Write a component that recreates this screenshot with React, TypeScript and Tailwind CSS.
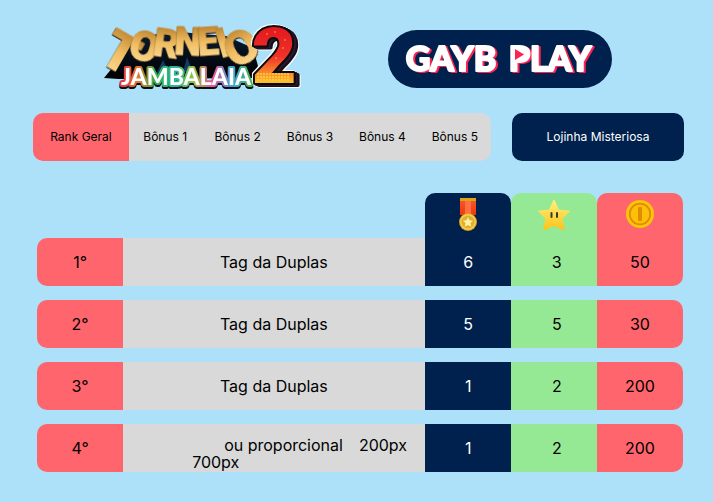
import React from "react";

type Row = { rank: string; name: React.ReactNode; medals: number; stars: number; coins: number };

const bonuses = ["Bônus 1", "Bônus 2", "Bônus 3", "Bônus 4", "Bônus 5"];

const rows: Row[] = [
  { rank: "1°", name: "Tag da Duplas", medals: 6, stars: 3, coins: 50 },
  { rank: "2°", name: "Tag da Duplas", medals: 5, stars: 5, coins: 30 },
  { rank: "3°", name: "Tag da Duplas", medals: 1, stars: 2, coins: 200 },
  {
    rank: "4°",
    name: (
      <div className="w-full pt-3 pl-[69px] text-left leading-[17px]">
        <div className="flex gap-4 pl-8">
          <span>ou proporcional</span>
          <span>200px</span>
        </div>
        <div>700px</div>
      </div>
    ),
    medals: 1,
    stars: 2,
    coins: 200,
  },
];

const arch = [
  { c: "T", x: 25, y: 53, size: 54, turn: 30 },
  { c: "O", x: 50, y: 43, size: 42, turn: 16 },
  { c: "R", x: 72, y: 39, size: 39, turn: 8 },
  { c: "N", x: 93, y: 37, size: 38, turn: 3 },
  { c: "E", x: 113, y: 37, size: 38, turn: -4 },
  { c: "I", x: 127, y: 39, size: 40, turn: -16 },
  { c: "O", x: 146, y: 46, size: 48, turn: -30 },
];

function TournamentLogo() {
  return (
    <svg viewBox="-10 -10 225 100" className="h-[100px] w-[225px]" role="img" aria-label="Torneio Jambalaia 2">
      <defs>
        <linearGradient id="gold" x1="0" y1="0" x2="0" y2="1">
          <stop offset=".1" stopColor="#b97f2c" />
          <stop offset=".5" stopColor="#f0bd62" />
          <stop offset="1" stopColor="#ffe3a0" />
        </linearGradient>
        <linearGradient id="rainbow" x1="0" y1="0" x2="1" y2="0">
          <stop offset="0" stopColor="#e0364c" />
          <stop offset=".13" stopColor="#e8742c" />
          <stop offset=".26" stopColor="#35b34c" />
          <stop offset=".42" stopColor="#2ab6a0" />
          <stop offset=".55" stopColor="#8dc63a" />
          <stop offset=".7" stopColor="#e84fa0" />
          <stop offset=".85" stopColor="#3ba6dc" />
          <stop offset="1" stopColor="#43b649" />
        </linearGradient>
        <linearGradient id="fire" x1="0" y1="0" x2="0" y2="1">
          <stop offset=".15" stopColor="#e2161f" />
          <stop offset=".5" stopColor="#f0312a" />
          <stop offset=".8" stopColor="#ffc52e" />
        </linearGradient>
        <linearGradient id="shade" x1="0" y1="0" x2="0" y2="1">
          <stop offset="0" stopColor="#0a1c33" />
          <stop offset="1" stopColor="#000" />
        </linearGradient>
      </defs>
      <path d="M34 24 44 18 85 14 131 18 158 30 163 48 157 60 24 61 9 60 22 44Z" fill="url(#shade)" />
      <path d="m60 58 8-16 8 16zM88 54l4-15 6 15z" fill="#123a63" />
      <g fontFamily="'Liberation Sans Narrow', Roboto, sans-serif" fontWeight="900" textAnchor="middle" strokeLinejoin="round">
        {arch.map((l, i) => (
          <text
            key={i}
            x={l.x}
            y={l.y}
            fontSize={l.size}
            transform={`rotate(${l.turn} ${l.x} ${l.y - 17})`}
            fill="url(#gold)"
            stroke="url(#gold)"
            strokeWidth="1"
            className="drop-shadow-[0_1px_0_#1a1206]"
          >
            {l.c}
          </text>
        ))}
      </g>
      <text
        x="91"
        y="67"
        fontFamily="Lato, sans-serif"
        fontWeight="900"
        fontSize="23"
        textAnchor="middle"
        strokeLinejoin="round"
        fill="#fff"
        stroke="url(#rainbow)"
        strokeWidth="4"
        paintOrder="stroke"
        className="drop-shadow-[0_2px_0_#0b0b12]"
      >
        JAMBALAIA
      </text>
      <text
        x="179"
        y="65"
        fontFamily="Roboto, sans-serif"
        fontWeight="900"
        fontSize="78"
        textAnchor="middle"
        strokeLinejoin="round"
        fill="url(#fire)"
        stroke="#0b0b0b"
        strokeWidth="4"
        paintOrder="stroke"
        className="[filter:drop-shadow(2px_1px_0_#2b1730)_drop-shadow(2px_1px_0_#15101c)_drop-shadow(1px_1px_0_#fff)_drop-shadow(-1px_-1px_0_#fff)]"
      >
        2
      </text>
      <g fill="#ffd23e">
        {[56, 59, 62].map((y) =>
          [163, 166, 169, 172, 175, 178, 181, 184, 187, 190, 193].map((x) => (
            <circle key={`${x}-${y}`} cx={x} cy={y} r="1" />
          )),
        )}
        <circle cx="172" cy="16" r=".7" />
        <circle cx="180" cy="14" r=".7" />
        <circle cx="190" cy="22" r=".7" />
        <circle cx="188" cy="30" r=".7" />
        <circle cx="181" cy="40" r=".7" />
      </g>
    </svg>
  );
}

function BrandLogo() {
  return (
    <svg viewBox="0 0 224 58" className="h-[58px] w-56" role="img" aria-label="Gayb Play">
      <g
        fontFamily="Lato, sans-serif"
        fontWeight="900"
        fontSize="34"
        textAnchor="middle"
        strokeLinejoin="round"
        fill="#fff"
        stroke="#fff"
        strokeWidth="2"
        className="drop-shadow-[2px_1px_0_#ff2352]"
      >
        <text x="63" y="41">GAYB</text>
        <text x="162" y="41">PLAY</text>
        <path d="M126 19h9v11h-9z" stroke="none" />
      </g>
      <path d="M127 19v11l9-5.5z" fill="#ff2352" />
    </svg>
  );
}

function Medal() {
  return (
    <svg viewBox="0 0 20 36" className="h-9 w-5" role="img" aria-label="Medalhas">
      <defs>
        <linearGradient id="ribbon" x1="0" y1="0" x2="0" y2="1">
          <stop offset="0" stopColor="#f4552c" />
          <stop offset="1" stopColor="#f03a0c" />
        </linearGradient>
      </defs>
      <path d="M2 3h16v15H2z" fill="url(#ribbon)" />
      <path d="M7 3h6v15H7z" fill="#ff6f42" />
      <path d="M2 1h16v3H2z" fill="#dba316" />
      <circle cx="10" cy="25" r="9" fill="#d99c1c" />
      <circle cx="10" cy="25" r="8" fill="#f6cf52" />
      <circle cx="10" cy="25" r="6.5" fill="#e3ae2d" />
      <path d="m10 20 1.5 3.3 3.6.4-2.7 2.4.8 3.6-3.2-1.8-3.2 1.8.8-3.6-2.7-2.4 3.6-.4z" fill="#fff1a5" />
    </svg>
  );
}

function Star() {
  return (
    <svg viewBox="0 0 32 32" className="size-8" role="img" aria-label="Estrelas">
      <defs>
        <linearGradient id="star" x1="0" y1="0" x2="0" y2="1">
          <stop offset="0" stopColor="#fff07c" />
          <stop offset="1" stopColor="#fcc419" />
        </linearGradient>
      </defs>
      <path
        d="M16 1.5 20.5 11.2 31 12.3 23.6 19.8 26.3 30.5 16 26 5.7 30.5 8.4 19.8 1 12.3 11.5 11.2Z"
        fill="url(#star)"
        stroke="url(#star)"
        strokeWidth="1.5"
        strokeLinejoin="round"
      />
      <rect x="12.5" y="13" width="2" height="6" rx="1" fill="#3c3a2a" />
      <rect x="18" y="13" width="2" height="6" rx="1" fill="#3c3a2a" />
    </svg>
  );
}

function Coin() {
  return (
    <svg viewBox="0 0 28 28" className="size-7" role="img" aria-label="Moedas">
      <circle cx="14" cy="14" r="14" fill="#fcc70a" />
      <circle cx="14" cy="14" r="10.3" fill="#fbc108" stroke="#e48a00" strokeWidth="1.8" />
      <rect x="12" y="7" width="4" height="14" rx="1" fill="#e48a00" />
    </svg>
  );
}

const grid = "grid grid-cols-[2fr_7fr_2fr_2fr_2fr]";
const cell = "flex h-12 items-center justify-center";
const head = "flex h-[45px] items-start justify-center rounded-t-[10px]";

export default function App() {
  return (
    <main className="min-h-screen bg-[#ade0f9] pb-7 font-['Inter',sans-serif] text-black">
      <header className="flex items-center justify-between pt-2 pr-[101px] pl-[85px]">
        <TournamentLogo />
        <h1 className="mt-[2px] flex rounded-full bg-[#00214d]">
          <BrandLogo />
        </h1>
      </header>

      <nav className="mt-[5px] flex gap-[21px] pr-[29px] pl-[33px] text-xs">
        <div className="flex h-12 flex-1 overflow-hidden rounded-[10px] bg-[#d9d9d9]">
          <button className="w-24 bg-[#ff656c]">Rank Geral</button>
          {bonuses.map((b) => (
            <button key={b} className="flex-1">{b}</button>
          ))}
        </div>
        <button className="h-12 w-[172px] rounded-[10px] bg-[#00214d] text-white">Lojinha Misteriosa</button>
      </nav>

      <table className="mt-8 flex flex-col pr-[30px] pl-[37px] text-base">
        <thead>
          <tr className={grid}>
            <th className={`${head} col-start-3 bg-[#00214d] pt-1`}>
              <Medal />
            </th>
            <th className={`${head} bg-[#96e994] pt-[6px]`}>
              <Star />
            </th>
            <th className={`${head} bg-[#ff656c] pt-[7px]`}>
              <Coin />
            </th>
          </tr>
        </thead>
        <tbody className="flex flex-col gap-[14px]">
          {rows.map((r, i) => (
            <tr key={r.rank} className={grid}>
              <td className={`${cell} rounded-l-[10px] bg-[#ff656c]`}>{r.rank}</td>
              <td className={`${cell} bg-[#d9d9d9]`}>{r.name}</td>
              <td className={`${cell} bg-[#00214d] pl-px text-white`}>{r.medals}</td>
              <td className={`${cell} bg-[#96e994] pl-[6px]`}>{r.stars}</td>
              <td className={`${cell} bg-[#ff656c] ${i === 0 ? "rounded-br-[10px]" : "rounded-r-[10px]"}`}>
                {r.coins}
              </td>
            </tr>
          ))}
        </tbody>
      </table>
    </main>
  );
}
